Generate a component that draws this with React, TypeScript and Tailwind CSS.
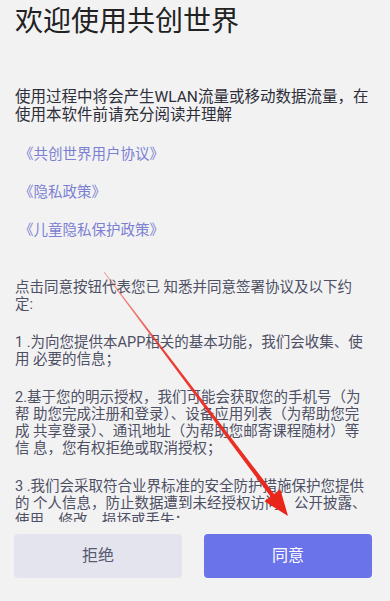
const font = { fontFamily: 'Roboto, "Noto Sans CJK SC", sans-serif' };

const terms: string[][] = [
  ["点击同意按钮代表您已 知悉并同意签署协议及以下约", "定:"],
  ["1 .为向您提供本APP相关的基本功能，我们会收集、使", "用 必要的信息；"],
  [
    "2.基于您的明示授权，我们可能会获取您的手机号（为",
    "帮 助您完成注册和登录）、设备应用列表（为帮助您完",
    "成 共享登录）、通讯地址（为帮助您邮寄课程随材）等",
    "信 息，您有权拒绝或取消授权；",
  ],
  [
    "3 .我们会采取符合业界标准的安全防护措施保护您提供",
    "的 个人信息，防止数据遭到未经授权访问、公开披露、",
    "使用、修改、损坏或丢失；",
  ],
];

const links = ["《共创世界用户协议》", "《隐私政策》", "《儿童隐私保护政策》"];

function Arrow() {
  return (
    <svg className="pointer-events-none absolute left-0 top-0" width="390" height="601" viewBox="0 0 390 601">
      <defs>
        <linearGradient id="fade" x1="104" y1="272" x2="288" y2="516" gradientUnits="userSpaceOnUse">
          <stop offset="0" stopColor="#ee3b30" stopOpacity="0.45" />
          <stop offset="0.35" stopColor="#ec2a20" stopOpacity="0.9" />
          <stop offset="1" stopColor="#ea2418" />
        </linearGradient>
      </defs>
      <polygon
        points="104.4,271.7 274.1,493.9 280.3,489.2 288,516 264.4,501.3 270.5,496.5 103.6,272.3"
        fill="url(#fade)"
      />
    </svg>
  );
}

export default function App() {
  return (
    <div className="relative flex h-[601px] w-[390px] flex-col overflow-hidden bg-[#f2f2f3]" style={font}>
      <div className="flex-1 overflow-hidden px-[15px]">
        <h1 className="mt-[4px] text-[28px] leading-[36px] text-[#222222]">欢迎使用共创世界</h1>

        <p className="mt-[48px] text-[15.5px] leading-[18px] text-[#2e2e38]">
          <span className="block whitespace-nowrap">使用过程中将会产生WLAN流量或移动数据流量，在</span>
          <span className="block whitespace-nowrap">使用本软件前请充分阅读并理解</span>
        </p>

        <div className="mt-[22px] flex flex-col gap-[20px] pl-[4px]">
          {links.map((l) => (
            <a key={l} href="#" className="text-[14.5px] leading-[18px] text-[#7c80d2]">
              {l}
            </a>
          ))}
        </div>

        <div className="mt-[39px] flex flex-col gap-[21px] text-[14.5px] leading-[17px] text-[#4e5064]">
          {terms.map((para, i) => (
            <p key={i}>
              {para.map((line) => (
                <span key={line} className="block whitespace-nowrap">
                  {line}
                </span>
              ))}
            </p>
          ))}
        </div>
      </div>

      <div className="flex gap-[22px] pb-[23px] pl-[14px] pr-[18px] pt-[12px]">
        <button className="h-[44px] flex-1 rounded-[4px] bg-[#e4e4ee] text-[16px] text-[#575a70]">拒绝</button>
        <button className="h-[44px] flex-1 rounded-[4px] bg-[#6b73ea] text-[16px] text-white">同意</button>
      </div>

      <Arrow />
    </div>
  );
}
